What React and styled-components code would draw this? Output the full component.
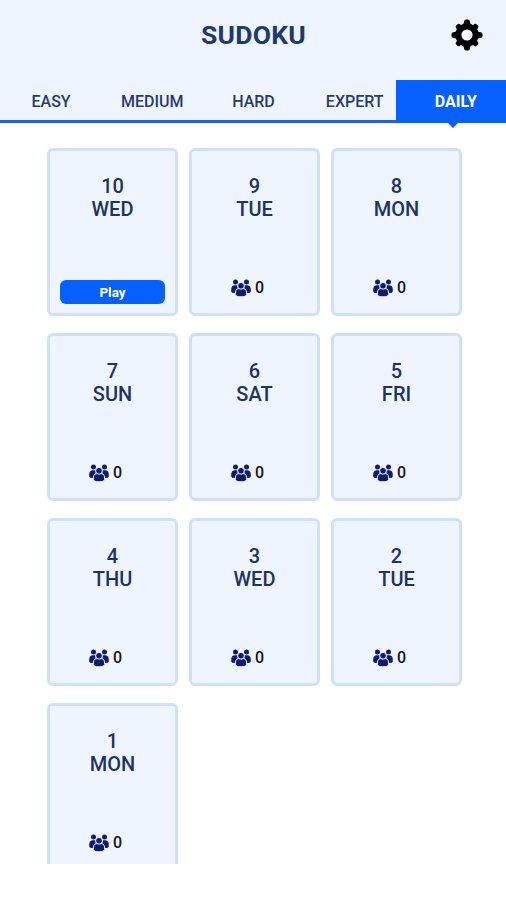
import React from 'react';
import styled, { createGlobalStyle } from 'styled-components';

const GlobalStyle = createGlobalStyle`
  * { box-sizing: border-box; }
  body {
    margin: 0;
    background: #fff;
    color: #1e3264;
    font-family: Roboto, sans-serif;
  }
`;

const Screen = styled.main`
  width: 506px;
  height: 864px;
  overflow: hidden;
`;

const Header = styled.header`
  display: grid;
  grid-template-columns: 79px 1fr 78px;
  align-items: center;
  justify-items: center;
  height: 80px;
  padding-bottom: 10px;
  background: #eff5ff;
`;

const Title = styled.h1`
  grid-column: 2;
  margin: 0;
  color: #1e3a70;
  font-size: 26.5px;
  letter-spacing: 0.2px;
  line-height: 30px;
  font-weight: 700;
`;

const SettingsButton = styled.button`
  display: flex;
  padding: 0;
  border: 0;
  background: none;
  svg { display: block; }
`;

const Tabs = styled.nav`
  display: grid;
  grid-template-columns: repeat(5, 1fr);
  height: 43px;
  background: #eff5ff;
  border-bottom: 3px solid #2160e8;
`;

const Tab = styled.button`
  position: relative;
  display: flex;
  align-items: center;
  justify-content: center;
  height: ${(p) => (p.$active ? 43 : 40)}px;
  margin: 0 0 0 ${(p) => (p.$active ? -9 : 0)}px;
  padding: ${(p) => (p.$active ? '0 0 0 10px' : '3px 0 0 1px')};
  border: 0;
  background: ${(p) => (p.$active ? '#0560ff' : 'transparent')};
  color: ${(p) => (p.$active ? '#fff' : '#2a3b6a')};
  font: ${(p) => (p.$active ? 700 : 500)} 16px/20px Roboto, sans-serif;
`;

const Pointer = styled.span`
  position: absolute;
  top: 100%;
  left: 52px;
  border: 5px solid transparent;
  border-top-color: #0560ff;
  border-bottom: 0;
`;

const Grid = styled.section`
  display: grid;
  grid-template-columns: repeat(3, 131px);
  grid-auto-rows: 168px;
  gap: 17px 11px;
  padding: 25px 0 0 47px;
`;

const Card = styled.article`
  display: flex;
  flex-direction: column;
  align-items: center;
  justify-content: space-between;
  padding: 24px 9px 9px;
  border: 3px solid #d0e0fa;
  border-radius: 6px;
  background: #eff5ff;
`;

const DateLabel = styled.div`
  display: flex;
  flex-direction: column;
  align-items: center;
  font-size: 20px;
  line-height: 23px;
  font-weight: 500;
`;

const PlayButton = styled.button`
  width: 105px;
  height: 24px;
  padding: 1px 0 0;
  border: 0;
  border-radius: 6px;
  background: #0560ff;
  color: #fff;
  font: 700 13.5px/23px Roboto, sans-serif;
`;

const Players = styled.div`
  display: flex;
  align-items: center;
  gap: 4px;
  height: 18px;
  margin-bottom: 7px;
  padding-right: 14px;
  color: #151515;
  font-size: 16px;
  line-height: 18px;
  font-weight: 500;
`;

const TEETH = [0, 45, 90, 135, 180, 225, 270, 315];

function GearIcon() {
  return (
    <svg width="32" height="32" viewBox="-16 -16 32 32">
      <circle r="11.6" fill="#000" />
      {TEETH.map((angle) => (
        <path
          key={angle}
          transform={`rotate(${angle}) scale(${angle % 90 ? 0.93 : 1})`}
          d="M-4.6-10C-3-11.4-3-13-2.8-14Q-2.4-15.5-1-15.5H1Q2.4-15.5 2.8-14C3-13 3-11.4 4.6-10Z"
          fill="#000"
        />
      ))}
      <circle r="5.6" fill="#fff" />
    </svg>
  );
}

function PlayersIcon() {
  return (
    <svg width="20" height="18" viewBox="0 0 20 18">
      <g fill="#101b69">
        <circle cx="4.5" cy="3" r="2.5" />
        <circle cx="15.5" cy="3" r="2.5" />
        <path d="M0.3 12.5Q-0.4 6.6 3.4 6.2H6.6V14H3Q0.6 14 0.3 12.5Z" />
        <path d="M19.7 12.5Q20.4 6.6 16.6 6.2H13.4V14H17Q19.4 14 19.7 12.5Z" />
      </g>
      <g fill="#101b69" stroke="#eff5ff" strokeWidth="1">
        <path d="M4.3 15.5Q4.2 9.8 7.5 9.6H12.5Q15.8 9.8 15.7 15.5Q15.2 17.8 10 17.8Q4.8 17.8 4.3 15.5Z" />
        <circle cx="10" cy="6.8" r="3.4" />
      </g>
    </svg>
  );
}

const LEVELS = ['EASY', 'MEDIUM', 'HARD', 'EXPERT', 'DAILY'];

const DAYS = [
  { date: 10, day: 'WED', playable: true },
  { date: 9, day: 'TUE' },
  { date: 8, day: 'MON' },
  { date: 7, day: 'SUN' },
  { date: 6, day: 'SAT' },
  { date: 5, day: 'FRI' },
  { date: 4, day: 'THU' },
  { date: 3, day: 'WED' },
  { date: 2, day: 'TUE' },
  { date: 1, day: 'MON' },
];

export default function App() {
  return (
    <>
      <GlobalStyle />
      <Screen>
        <Header>
          <Title>SUDOKU</Title>
          <SettingsButton aria-label="Settings">
            <GearIcon />
          </SettingsButton>
        </Header>
        <Tabs>
          {LEVELS.map((level) => (
            <Tab key={level} $active={level === 'DAILY'}>
              {level}
              {level === 'DAILY' && <Pointer />}
            </Tab>
          ))}
        </Tabs>
        <Grid>
          {DAYS.map(({ date, day, playable }) => (
            <Card key={date}>
              <DateLabel>
                <span>{date}</span>
                <span>{day}</span>
              </DateLabel>
              {playable ? (
                <PlayButton>Play</PlayButton>
              ) : (
                <Players>
                  <PlayersIcon />
                  <span>0</span>
                </Players>
              )}
            </Card>
          ))}
        </Grid>
      </Screen>
    </>
  );
}
